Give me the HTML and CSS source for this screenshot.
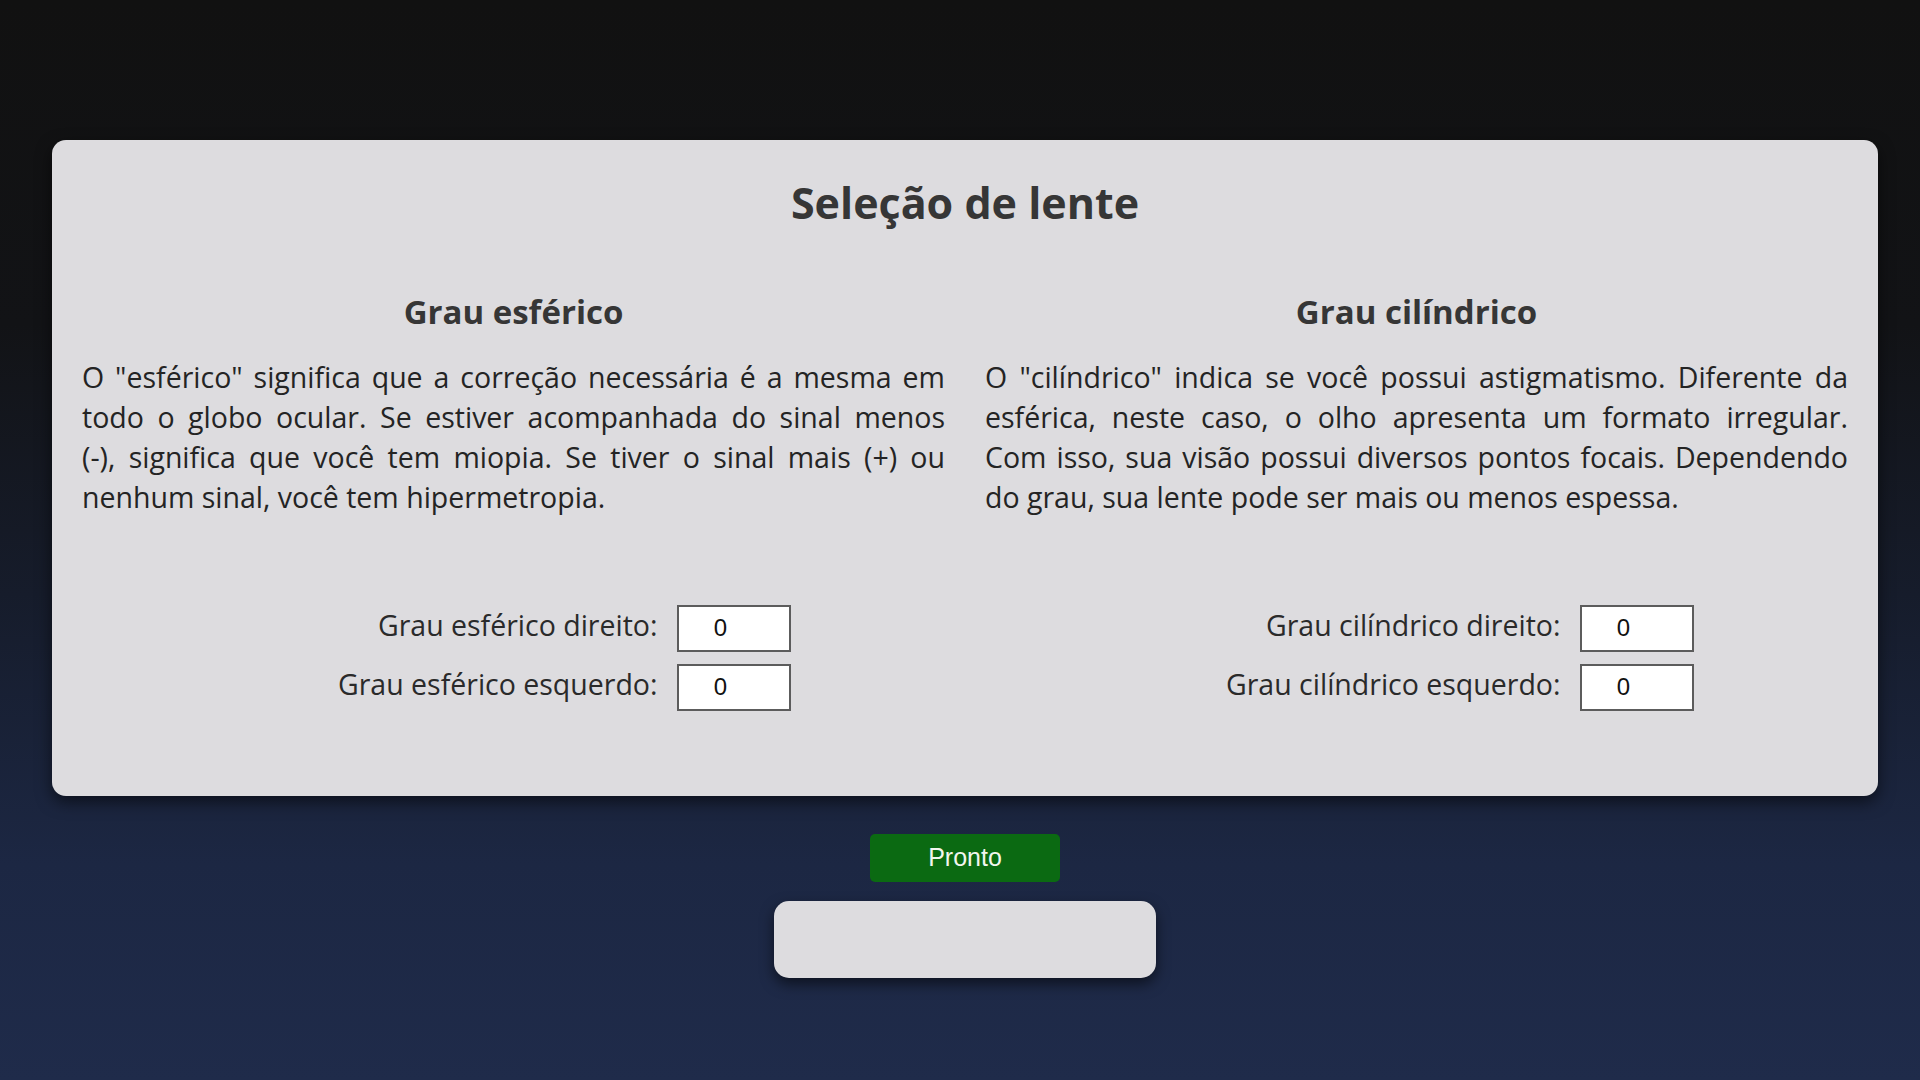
FILE: index.html
```html
<!DOCTYPE html>
<html lang="pt-BR">
<head>
<meta charset="utf-8">
<title>Seleção de lente</title>
<link rel="stylesheet" href="styles.css">
</head>
<body>
<div class="page">
  <main class="card">
    <h1 class="title">Seleção de lente</h1>
    <div class="cols">
      <section class="col">
        <h2 class="col-title">Grau esférico</h2>
        <p class="desc"><span>O "esférico" significa que a correção necessária é a mesma em</span> <span>todo o globo ocular. Se estiver acompanhada do sinal menos</span> <span>(-), significa que você tem miopia. Se tiver o sinal mais (+) ou</span> <span>nenhum sinal, você tem hipermetropia.</span></p>
        <div class="fields">
          <div class="field">
            <label class="field-label" for="esf-dir">Grau esférico direito:</label>
            <input class="field-input" id="esf-dir" type="text" value="0">
          </div>
          <div class="field">
            <label class="field-label" for="esf-esq">Grau esférico esquerdo:</label>
            <input class="field-input" id="esf-esq" type="text" value="0">
          </div>
        </div>
      </section>
      <section class="col">
        <h2 class="col-title">Grau cilíndrico</h2>
        <p class="desc"><span>O "cilíndrico" indica se você possui astigmatismo. Diferente da</span> <span>esférica, neste caso, o olho apresenta um formato irregular.</span> <span>Com isso, sua visão possui diversos pontos focais. Dependendo</span> <span>do grau, sua lente pode ser mais ou menos espessa.</span></p>
        <div class="fields">
          <div class="field">
            <label class="field-label" for="cil-dir">Grau cilíndrico direito:</label>
            <input class="field-input" id="cil-dir" type="text" value="0">
          </div>
          <div class="field">
            <label class="field-label" for="cil-esq">Grau cilíndrico esquerdo:</label>
            <input class="field-input" id="cil-esq" type="text" value="0">
          </div>
        </div>
      </section>
    </div>
  </main>
  <button class="btn" type="button">Pronto</button>
  <div class="result"></div>
</div>
</body>
</html>
```

FILE: styles.css
```css
html, body {
  margin: 0;
  padding: 0;
}

body {
  min-height: 100vh;
  background: linear-gradient(to bottom, #111111 0%, #121316 30%, #161c2b 55%, #1c2743 80%, #1f2b4a 100%);
  font-family: "Open Sans", "Noto Sans", "DejaVu Sans", sans-serif;
  color: #242424;
}

.page {
  margin: 0 42px 0 52px;
  padding-top: 140px;
  display: flex;
  flex-direction: column;
  align-items: center;
}

.card {
  align-self: stretch;
  background: #dddcdf;
  border-radius: 14px;
  padding: 36.5px 30px 85px;
  box-shadow: 0 6px 16px rgba(0, 0, 0, 0.55);
}

.title {
  margin: 0;
  text-align: center;
  font-size: 43px;
  line-height: 52px;
  font-weight: 700;
  color: #363636;
}

.cols {
  margin-top: 63.5px;
  display: grid;
  grid-template-columns: 1fr 1fr;
  column-gap: 40px;
}

.col-title {
  margin: 0;
  text-align: center;
  font-size: 33px;
  line-height: 40px;
  font-weight: 700;
  color: #363636;
}

.desc {
  margin: 25px 0 0;
  font-size: 28.5px;
  line-height: 40px;
  text-align: justify;
}

.desc span {
  display: block;
  text-align-last: justify;
}

.desc span:last-child {
  text-align-last: left;
}

.fields {
  width: 554px;
  margin: 87.6px auto 0;
  display: flex;
  flex-direction: column;
  gap: 12px;
}

.field {
  display: flex;
  align-items: baseline;
  gap: 19px;
}

.field-label {
  width: 421px;
  flex: none;
  text-align: right;
  font-size: 28.5px;
  line-height: 39.4px;
  color: #2a2a2a;
}

.field-input {
  box-sizing: border-box;
  width: 114px;
  height: 47px;
  margin: 0;
  padding: 0 26px 0 0;
  border: 2px solid #5c5c5c;
  border-radius: 0;
  background: #ffffff;
  font-family: "Liberation Sans", Arial, sans-serif;
  font-size: 24px;
  color: #111111;
  text-align: center;
}

.btn {
  margin-top: 38px;
  width: 190px;
  height: 48px;
  border: none;
  border-radius: 5px;
  background: #0b6a12;
  color: #f2f6ee;
  font-family: "Liberation Sans", Arial, sans-serif;
  font-size: 25px;
  padding: 0;
}

.result {
  margin-top: 19px;
  width: 382px;
  height: 77px;
  background: #dddcdf;
  border-radius: 15px;
  box-shadow: 0 6px 14px rgba(0, 0, 0, 0.55);
}
```
